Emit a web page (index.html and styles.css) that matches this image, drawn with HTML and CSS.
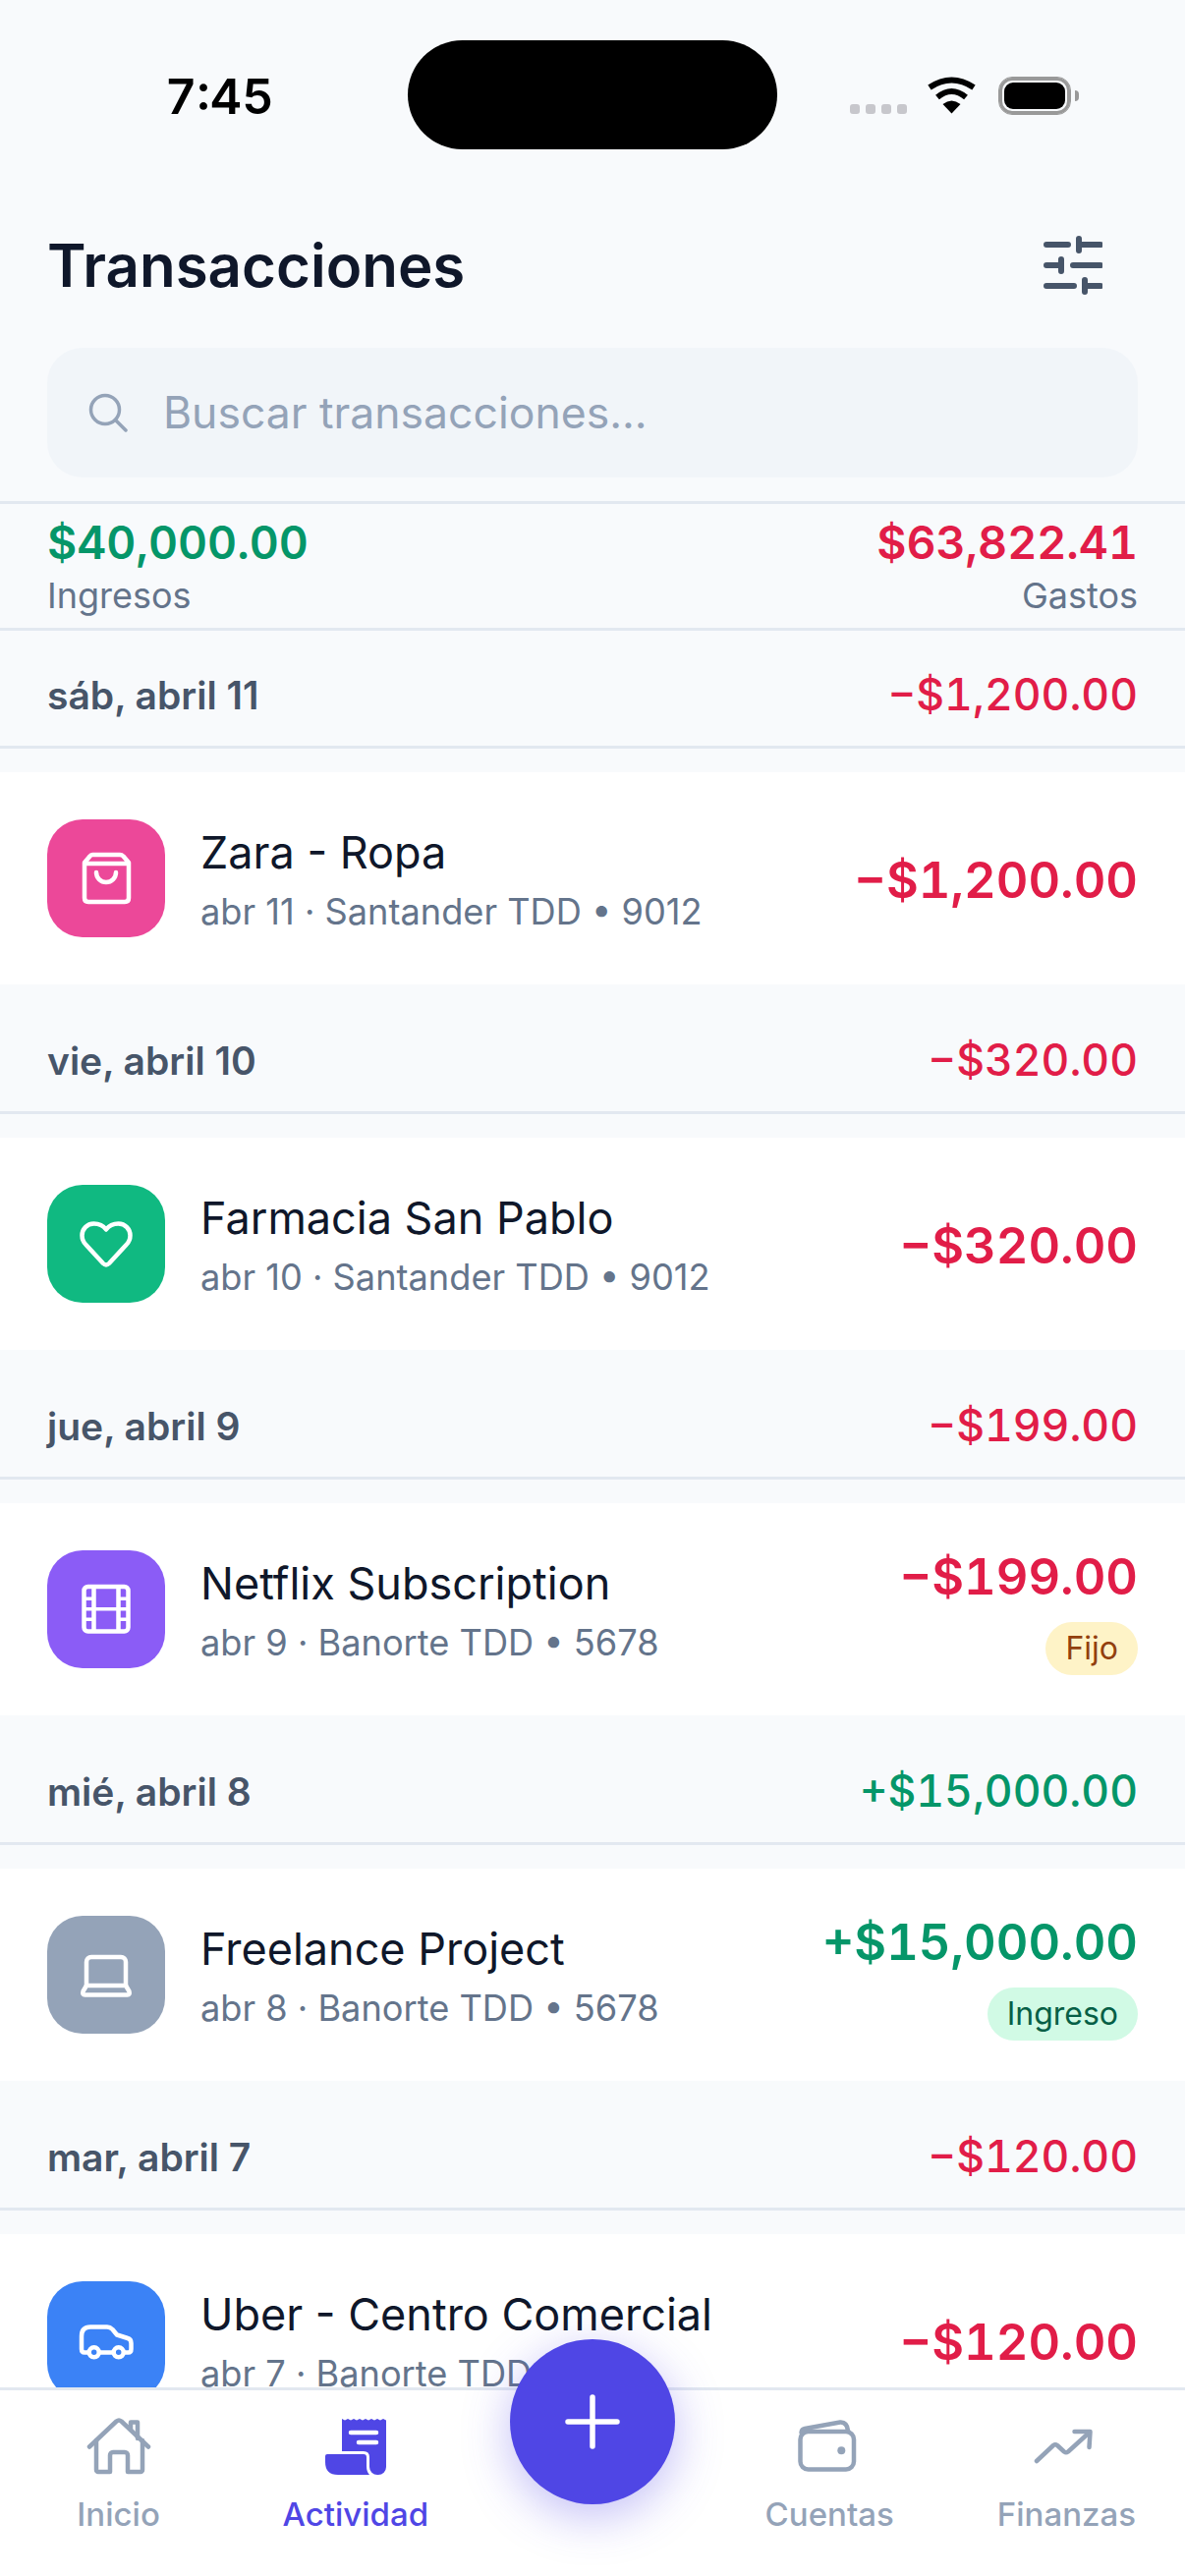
FILE: index.html
```html
<!DOCTYPE html>
<html lang="es">
<head>
    <meta charset="UTF-8">
    <meta name="viewport" content="width=device-width, initial-scale=1.0">
    <title>Transacciones</title>
    <link rel="stylesheet" href="styles.css">
</head>
<body>
<div class="app">

    <div class="status-bar">
        <span class="status-time">7:45</span>
        <div class="island"></div>
        <div class="status-icons">
            <div class="signal-dots"><i></i><i></i><i></i><i></i></div>
            <svg class="wifi" width="51" height="38" viewBox="0 0 51 38">
                <path d="M3 11 Q25.5 -4 48 11" fill="none" stroke="#000" stroke-width="6"/>
                <path d="M11 21 Q25.5 9 40 21" fill="none" stroke="#000" stroke-width="6"/>
                <path d="M16.5 28 Q25.5 21 34.500 28 L25.500 37.500 Z" fill="#000"/>
            </svg>
            <div class="battery"><div class="battery-fill"></div></div>
            <div class="battery-nub"></div>
        </div>
    </div>

    <div class="title-row">
        <h1 class="page-title">Transacciones</h1>
        <svg class="filter-icon" width="60" height="60" viewBox="0 0 60 60" fill="none" stroke="#475569" stroke-width="6" stroke-linecap="round">
            <path d="M3 9H25M36 3V15M38 9H58"/>
            <path d="M3 30H16M18 24V36M30 30H58"/>
            <path d="M3 51H31M42 45V57M44 51H58"/>
        </svg>
    </div>

    <div class="search-box">
        <svg width="40" height="40" viewBox="0 0 40 40" fill="none" stroke="#94a3b8" stroke-width="3.500" stroke-linecap="round">
            <circle cx="17" cy="17" r="14.500"/>
            <path d="M27.500 27.500L38 38"/>
        </svg>
        <span class="search-placeholder">Buscar transacciones...</span>
    </div>

    <div class="summary">
        <div class="summary-col">
            <span class="summary-amount text-green">$40,000.00</span>
            <span class="summary-label">Ingresos</span>
        </div>
        <div class="summary-col summary-col-right">
            <span class="summary-amount text-red">$63,822.41</span>
            <span class="summary-label">Gastos</span>
        </div>
    </div>

    <div class="list">

        <div class="day-header day-first">
            <span class="day-name">sáb, abril 11</span>
            <span class="day-total text-red">−$1,200.00</span>
        </div>
        <div class="tx-row">
            <div class="tx-icon bg-pink">
                <svg width="60" height="60" viewBox="0 0 60 60" fill="none" stroke="#fff" stroke-width="4.500" stroke-linecap="round" stroke-linejoin="round">
                    <path d="M16 6H44Q46 6 47.500 7.500L53 14V50Q53 54 49 54H12Q8 54 8 50V14L13.500 7.500Q14.500 6 16 6ZM8 15H53"/>
                    <path d="M20 24A10 10 0 0 0 40 24"/>
                </svg>
            </div>
            <div class="tx-info">
                <div class="tx-name">Zara - Ropa</div>
                <div class="tx-sub">abr 11 · Santander TDD • 9012</div>
            </div>
            <div class="tx-right">
                <span class="tx-amount text-red">−$1,200.00</span>
            </div>
        </div>

        <div class="day-header">
            <span class="day-name">vie, abril 10</span>
            <span class="day-total text-red">−$320.00</span>
        </div>
        <div class="tx-row">
            <div class="tx-icon bg-emerald">
                <svg width="60" height="60" viewBox="0 0 60 60" fill="none" stroke="#fff" stroke-width="4.500" stroke-linejoin="round">
                    <path d="M30 15.500C27 11.500 22 9.500 17.500 9.500C10.500 9.500 5.500 15 5.500 21.500C5.500 25.500 7 28.500 9.500 31L27 50Q30 53 33 50L50.500 31C53 28.500 54.500 25.500 54.500 21.500C54.500 15 49.500 9.500 42.500 9.500C38 9.500 33 11.500 30 15.500Z"/>
                </svg>
            </div>
            <div class="tx-info">
                <div class="tx-name">Farmacia San Pablo</div>
                <div class="tx-sub">abr 10 · Santander TDD • 9012</div>
            </div>
            <div class="tx-right">
                <span class="tx-amount text-red">−$320.00</span>
            </div>
        </div>

        <div class="day-header">
            <span class="day-name">jue, abril 9</span>
            <span class="day-total text-red">−$199.00</span>
        </div>
        <div class="tx-row">
            <div class="tx-icon bg-violet">
                <svg width="60" height="60" viewBox="0 0 60 60" fill="none" stroke="#fff" stroke-width="4.500">
                    <rect x="7.500" y="7" width="45" height="45.500" rx="4"/>
                    <path d="M17.500 7V52.500M42.500 7V52.500"/>
                    <path d="M17.500 29.700H42.500M7.500 19.300H17.500M7.500 29.700H17.500M7.500 40.300H17.500M42.500 19.300H52.500M42.500 29.700H52.500M42.500 40.300H52.500" stroke-width="3.500"/>
                </svg>
            </div>
            <div class="tx-info">
                <div class="tx-name">Netflix Subscription</div>
                <div class="tx-sub">abr 9 · Banorte TDD • 5678</div>
            </div>
            <div class="tx-right">
                <span class="tx-amount text-red">−$199.00</span>
                <span class="badge badge-fixed">Fijo</span>
            </div>
        </div>

        <div class="day-header">
            <span class="day-name">mié, abril 8</span>
            <span class="day-total text-green">+$15,000.00</span>
        </div>
        <div class="tx-row">
            <div class="tx-icon bg-slate">
                <svg width="60" height="60" viewBox="0 0 60 60" fill="none" stroke="#fff" stroke-width="4.500" stroke-linejoin="round">
                    <path d="M10 41V17A5 5 0 0 1 15 12H45A5 5 0 0 1 50 17V41"/>
                    <path d="M10 41H50L53.500 47Q54.500 50.500 51.500 50.500H8.500Q5.500 50.500 6.500 47Z"/>
                </svg>
            </div>
            <div class="tx-info">
                <div class="tx-name">Freelance Project</div>
                <div class="tx-sub">abr 8 · Banorte TDD • 5678</div>
            </div>
            <div class="tx-right">
                <span class="tx-amount text-green">+$15,000.00</span>
                <span class="badge badge-income">Ingreso</span>
            </div>
        </div>

        <div class="day-header">
            <span class="day-name">mar, abril 7</span>
            <span class="day-total text-red">−$120.00</span>
        </div>
        <div class="tx-row">
            <div class="tx-icon bg-blue">
                <svg width="60" height="60" viewBox="0 0 60 60" fill="none" stroke="#fff" stroke-width="4.500" stroke-linecap="round" stroke-linejoin="round">
                    <path d="M11.500 42.500H8Q5 42.500 5 39V26Q5 16.500 14 16.500H31Q34 16.500 36.500 19L41 24.500L52 28Q55.500 29 55.500 33V39Q55.500 42.500 52.500 42.500H49M24 42.500H36.500"/>
                    <circle cx="17.700" cy="42.300" r="5"/>
                    <circle cx="42.700" cy="42.300" r="5"/>
                </svg>
            </div>
            <div class="tx-info">
                <div class="tx-name">Uber - Centro Comercial</div>
                <div class="tx-sub">abr 7 · Banorte TDD</div>
            </div>
            <div class="tx-right">
                <span class="tx-amount text-red">−$120.00</span>
            </div>
        </div>

    </div>

    <nav class="tab-bar">
        <div class="tab">
            <svg width="66" height="60" viewBox="0 0 66 60" fill="none" stroke="#94a3b8" stroke-width="4.500" stroke-linecap="round" stroke-linejoin="round">
                <path d="M3 30.500L30.500 4.500Q33 2.500 35.500 4.500L63 30.500"/>
                <path d="M45 13V5.500H52V22"/>
                <path d="M10 24V54A2 2 0 0 0 12 56H24V39A3 3 0 0 1 27 36H39A3 3 0 0 1 42 39V56H55A2 2 0 0 0 57 54V24"/>
            </svg>
            <span class="tab-label">Inicio</span>
        </div>
        <div class="tab tab-active">
            <svg width="66" height="60" viewBox="0 0 66 60">
                <path fill="#4f46e5" d="M19 2L22 3.500L25 2L28 3.500L31 2L34 3.500L37 2L40 3.500L43 2L46 3.500L49 2L52 3.500L55 2L58 3.500L61 2L64 3.500V51A8 8 0 0 1 56 59H55A8 8 0 0 1 47 51V41Q47 35 41 35H19Z"/>
                <path fill="#4f46e5" d="M4 38H41Q44 38 44 41V50Q44 56 47 59H15Q2 59 2 46V40Q2 38 4 38Z"/>
                <path d="M28 16H54M36 26H54" fill="none" stroke="#fff" stroke-width="4.500" stroke-linecap="round"/>
            </svg>
            <span class="tab-label">Actividad</span>
        </div>
        <div class="tab"></div>
        <div class="tab">
            <svg width="66" height="60" viewBox="0 0 66 60" fill="none" stroke="#94a3b8" stroke-width="4.500" stroke-linecap="round" stroke-linejoin="round">
                <rect x="3.500" y="15" width="54.500" height="38.500" rx="8"/>
                <path d="M4.500 16Q5 12.500 8 12L44 5.500Q51 5 52 14"/>
                <circle cx="45.300" cy="34.300" r="4" fill="#94a3b8" stroke="none"/>
            </svg>
            <span class="tab-label">Cuentas</span>
        </div>
        <div class="tab">
            <svg width="66" height="60" viewBox="0 0 66 60" fill="none" stroke="#94a3b8" stroke-width="4.500" stroke-linecap="round" stroke-linejoin="round">
                <path d="M3 45L20 29Q22 27.500 24 29L31 35.500Q33 37 35 35.500L56.500 16"/>
                <path d="M41.500 15H57.500L56.500 31"/>
            </svg>
            <span class="tab-label">Finanzas</span>
        </div>
    </nav>

    <button class="fab">
        <svg width="56" height="56" viewBox="0 0 56 56" fill="none" stroke="#fff" stroke-width="5.500" stroke-linecap="round">
            <path d="M28 3V53M3 28H53"/>
        </svg>
    </button>

</div>
</body>
</html>
```

FILE: styles.css
```css
* {
    box-sizing: border-box;
}

body {
    margin: 0;
    background-color: #f8fafc;
    color: #0f172a;
    font-family: Inter, "Noto Sans", sans-serif;
}

.app {
    position: relative;
    display: flex;
    flex-direction: column;
    height: 2622px;
    overflow: hidden;
}

/* status bar */
.status-bar {
    display: flex;
    align-items: flex-start;
    height: 210px;
    padding: 41px 0 0 168px;
    flex-shrink: 0;
}

.status-time {
    width: 247px;
    margin-top: 28px;
    font-size: 50px;
    line-height: 58px;
    font-weight: 600;
    font-variant-numeric: tabular-nums;
    color: #000;
}

.island {
    width: 376px;
    height: 111px;
    border-radius: 56px;
    background-color: #000;
}

.status-icons {
    display: flex;
    align-items: flex-start;
    margin-top: 37px;
    margin-left: 74px;
}

.signal-dots {
    display: flex;
    gap: 6px;
    margin-top: 28px;
}

.signal-dots i {
    width: 10px;
    height: 10px;
    border-radius: 3px;
    background-color: #c7c7cc;
}

.wifi {
    margin-left: 20px;
}

.battery {
    width: 74px;
    height: 39px;
    margin-left: 22px;
    padding: 5px;
    border: 1px solid #999;
    outline: 3px solid #999;
    outline-offset: -4px;
    border-radius: 14px;
}

.battery-fill {
    width: 100%;
    height: 100%;
    border-radius: 9px;
    background-color: #000;
}

.battery-nub {
    width: 4px;
    height: 11px;
    margin: 14px 0 0 4px;
    border-radius: 0 4px 4px 0;
    background-color: #999;
}

/* header */
.title-row {
    display: flex;
    align-items: center;
    justify-content: space-between;
    height: 120px;
    padding: 0 84px 0 48px;
    flex-shrink: 0;
}

.page-title {
    margin: 0;
    font-size: 60px;
    line-height: 72px;
    font-weight: 600;
}

.search-box {
    display: flex;
    align-items: center;
    gap: 36px;
    height: 132px;
    margin: 24px 48px;
    padding-left: 42px;
    border-radius: 36px;
    background-color: #f1f5f9;
    flex-shrink: 0;
}

.search-placeholder {
    font-size: 44.5px;
    color: #94a3b8;
}

.summary {
    display: flex;
    justify-content: space-between;
    padding: 13px 48px 11px;
    border-top: 3px solid #e2e8f0;
    border-bottom: 3px solid #e2e8f0;
    flex-shrink: 0;
}

.summary-col {
    display: flex;
    flex-direction: column;
    gap: 6px;
}

.summary-col-right {
    align-items: flex-end;
}

.summary-amount {
    font-size: 46.5px;
    line-height: 52px;
    font-weight: 600;
    font-variant-numeric: tabular-nums;
}

.summary-label {
    font-size: 36px;
    line-height: 44px;
    color: #64748b;
}

/* list */
.list {
    flex: 1;
    min-height: 0;
    overflow: hidden;
}

.day-header {
    display: flex;
    align-items: center;
    justify-content: space-between;
    height: 120px;
    margin-top: 12px;
    padding: 13px 48px 0;
    border-bottom: 3px solid #e2e8f0;
}

.day-first {
    margin-top: 0;
}

.day-name {
    font-size: 39px;
    font-weight: 600;
    color: #475569;
}

.day-total {
    font-size: 44.5px;
    font-weight: 500;
    font-variant-numeric: tabular-nums;
}

.tx-row {
    display: flex;
    align-items: center;
    gap: 36px;
    height: 216px;
    margin-top: 24px;
    padding: 0 48px;
    background-color: #fff;
}

.tx-icon {
    display: flex;
    align-items: center;
    justify-content: center;
    width: 120px;
    height: 120px;
    border-radius: 36px;
    flex-shrink: 0;
}

.bg-pink { background-color: #ec4899; }
.bg-emerald { background-color: #10b981; }
.bg-violet { background-color: #8b5cf6; }
.bg-slate { background-color: #94a3b8; }
.bg-blue { background-color: #3b82f6; }

.tx-info {
    flex: 1;
    min-width: 0;
    padding-top: 4px;
}

.tx-name {
    font-size: 45px;
    line-height: 52px;
}

.tx-sub {
    margin-top: 12px;
    font-size: 36.2px;
    line-height: 44px;
    color: #64748b;
    white-space: nowrap;
}

.tx-right {
    display: flex;
    flex-direction: column;
    align-items: flex-end;
    gap: 16px;
    padding-top: 3px;
}

.tx-amount {
    font-size: 50.5px;
    line-height: 60px;
    font-weight: 600;
    font-variant-numeric: tabular-nums;
}

.text-red { color: #e11d48; }
.text-green { color: #059669; }

.badge {
    height: 54px;
    padding: 0 20px;
    border-radius: 27px;
    font-size: 32px;
    line-height: 54px;
}

.badge-fixed {
    background-color: #fef3c7;
    color: #92400e;
}

.badge-income {
    background-color: #d1fae5;
    color: #065f46;
}

/* bottom tabs */
.tab-bar {
    display: grid;
    grid-template-columns: repeat(5, 1fr);
    height: 192px;
    padding-top: 27px;
    border-top: 3px solid #e2e8f0;
    background-color: #fff;
    flex-shrink: 0;
}

.tab {
    display: flex;
    flex-direction: column;
    align-items: center;
    gap: 18px;
}

.tab-label {
    font-size: 33px;
    line-height: 42px;
    font-weight: 500;
    color: #94a3b8;
}

.tab-active .tab-label {
    color: #4f46e5;
}

.fab {
    position: absolute;
    left: 519px;
    top: 2381px;
    display: flex;
    align-items: center;
    justify-content: center;
    width: 168px;
    height: 168px;
    padding: 0;
    border: none;
    border-radius: 50%;
    background-color: #4f46e5;
    box-shadow: 0 12px 48px rgba(79, 70, 229, 0.35);
}
```
